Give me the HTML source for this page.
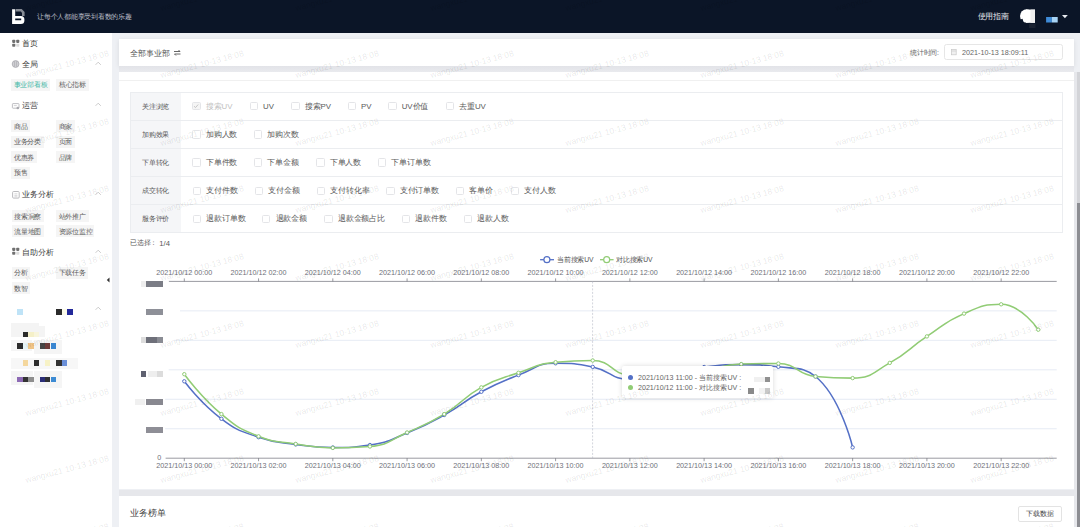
<!DOCTYPE html><html><head><meta charset="utf-8"><style>
*{box-sizing:border-box;margin:0;padding:0}
html,body{width:1080px;height:527px;overflow:hidden;background:#eef0f4;font-family:"Liberation Sans",sans-serif;}
.abs{position:absolute}
.t{position:absolute;white-space:nowrap;line-height:1}
.tag{position:absolute;background:#f5f5f5;height:12px;}
.tag>span{position:absolute;left:2.4px;top:3.5px;font-size:6.75px;color:#595959;line-height:1;white-space:nowrap}
.cb{position:absolute;width:8.3px;height:8.3px;border:1px solid #e4e5e8;border-radius:1.5px;background:#fff}
.opt{position:absolute;font-size:7.875px;color:#595959;line-height:1;white-space:nowrap}
.lab{position:absolute;left:142px;font-size:6.75px;color:#595959;line-height:1;white-space:nowrap}
.pix{position:absolute}
</style></head><body>

<div class="abs" style="left:0;top:0;width:1080px;height:33px;background:#0b1527"></div>
<svg class="abs" style="left:0;top:0" width="40" height="33" viewBox="0 0 40 33">
<path d="M15.7 9.1 H21.7 L24.6 12.0 V15.9 H22.0 V12.9 L20.9 11.6 H15.7 Z" fill="#868b94"/>
<path d="M12.1 9.3 H15.2 V15.9 H20.9 A3.5 3.5 0 0 1 24.4 19.4 V20.4 A3.5 3.5 0 0 1 20.9 23.9 H12.1 Z M15.2 18.4 V20.3 H21.2 V18.4 Z" fill="#fff" fill-rule="evenodd"/>
</svg>
<div class="t" style="left:37px;top:13.6px;font-size:6.75px;color:#b9bdc6"><span style="letter-spacing:-0.250px">让每个人都能享受到看数的乐趣</span></div>
<div class="t" style="left:977.7px;top:12.8px;font-size:7.7px;color:#e6e8ec"><span style="letter-spacing:-0.300px">使用指南</span></div>
<svg class="abs" style="left:1015px;top:5px" width="60" height="25" viewBox="1015 5 60 25">
<circle cx="1026.7" cy="16" r="6.7" fill="#fff"/><rect x="1026" y="9.6" width="9" height="13.2" fill="#fff"/>
<rect x="1029" y="23.7" width="6.5" height="4.3" fill="#1a2232"/><path d="M1020.5 19.5 L1022.5 18.8 L1023.8 22.9 L1021.5 21.8 Z" fill="#0b1527"/><rect x="1030.5" y="9.6" width="4.5" height="13.2" fill="#eeeeee"/>
<rect x="1046.1" y="17" width="5.8" height="5.5" fill="#3f8bd8"/><rect x="1051.9" y="17" width="5.8" height="5.5" fill="#a8d4f5"/>
<path d="M1062 15.1 H1067.8 L1064.9 18.3 Z" fill="#e8ebf0"/>
</svg>
<div class="abs" style="left:0;top:33px;width:112px;height:494px;background:#fff"></div>
<div class="abs" style="left:1074px;top:71.5px;width:6px;height:456px;background:#e6e7eb"></div>
<div class="abs" style="left:1077.4px;top:71.5px;width:2.6px;height:131.2px;background:#d3d4d8"></div>
<div class="abs" style="left:1077.4px;top:202.7px;width:2.6px;height:325px;background:#8c8d92"></div>
<div class="t" style="left:22.3px;top:40.4px;font-size:7.875px;color:#3a3a3a"><span style="letter-spacing:-0.125px">首页</span></div>
<svg class="abs" style="left:0;top:36px" width="22" height="16" viewBox="0 36 22 16"><rect x="12.2" y="39.8" width="3.1" height="3.1" rx="0.8" fill="#707070"/><rect x="16.2" y="39.8" width="3.1" height="3.1" rx="0.8" fill="#707070"/><rect x="12.2" y="43.7" width="3.1" height="3.1" rx="0.8" fill="#707070"/><rect x="16.2" y="43.7" width="3.1" height="3.1" rx="0.8" fill="#dcdcdc"/></svg>
<div class="t" style="left:22.3px;top:60.699999999999996px;font-size:7.875px;color:#3a3a3a"><span style="letter-spacing:-0.125px">全局</span></div>
<svg class="abs" style="left:0;top:56.3px" width="22" height="16" viewBox="0 56.3 22 16"><circle cx="15.6" cy="64.3" r="3.4" fill="#d0d0d4" stroke="#a8a8ae" stroke-width="0.8"/><path d="M14.6 61.699999999999996 V66.89999999999999 M16.6 61.699999999999996 V66.89999999999999" stroke="#a0a0a6" stroke-width="0.55"/></svg>
<svg class="abs" style="left:94.5px;top:60.8px" width="7" height="5"><path d="M0.6 3.8 L3.2 1.2 L5.8 3.8" stroke="#c4c4c4" stroke-width="0.9" fill="none"/></svg>
<div class="t" style="left:22.3px;top:101.9px;font-size:7.875px;color:#3a3a3a"><span style="letter-spacing:-0.125px">运营</span></div>
<svg class="abs" style="left:0;top:97.5px" width="22" height="16" viewBox="0 97.5 22 16"><rect x="12.4" y="103.1" width="6.6" height="4.6" rx="0.6" fill="none" stroke="#b8b8bc" stroke-width="0.9"/><path d="M13.8 105.1 H16.8" stroke="#c8c8cc" stroke-width="0.8"/><circle cx="17.8" cy="107.5" r="1.3" fill="#a8a8ae"/></svg>
<svg class="abs" style="left:94.5px;top:102.0px" width="7" height="5"><path d="M0.6 3.8 L3.2 1.2 L5.8 3.8" stroke="#c4c4c4" stroke-width="0.9" fill="none"/></svg>
<div class="t" style="left:22.3px;top:191.20000000000002px;font-size:7.875px;color:#3a3a3a"><span style="letter-spacing:-0.125px">业务分析</span></div>
<svg class="abs" style="left:0;top:186.8px" width="22" height="16" viewBox="0 186.8 22 16"><rect x="12.6" y="191.3" width="6.6" height="6.6" rx="1" fill="none" stroke="#b4b4b8" stroke-width="0.9"/><path d="M14.4 193.60000000000002 H17.4 M14.4 195.20000000000002 H17.4 M14.4 196.60000000000002 H17.4" stroke="#c8c8cc" stroke-width="0.7"/></svg>
<svg class="abs" style="left:94.5px;top:191.3px" width="7" height="5"><path d="M0.6 3.8 L3.2 1.2 L5.8 3.8" stroke="#c4c4c4" stroke-width="0.9" fill="none"/></svg>
<div class="t" style="left:22.3px;top:248.8px;font-size:7.875px;color:#3a3a3a"><span style="letter-spacing:-0.125px">自助分析</span></div>
<svg class="abs" style="left:0;top:244.4px" width="22" height="16" viewBox="0 244.4 22 16"><rect x="12.2" y="248.20000000000002" width="3.1" height="3.1" rx="0.8" fill="#707070"/><rect x="16.2" y="248.20000000000002" width="3.1" height="3.1" rx="0.8" fill="#707070"/><rect x="12.2" y="252.1" width="3.1" height="3.1" rx="0.8" fill="#707070"/><rect x="16.2" y="252.1" width="3.1" height="3.1" rx="0.8" fill="#dcdcdc"/></svg>
<svg class="abs" style="left:94.5px;top:248.9px" width="7" height="5"><path d="M0.6 3.8 L3.2 1.2 L5.8 3.8" stroke="#c4c4c4" stroke-width="0.9" fill="none"/></svg>
<div class="tag" style="left:11.3px;top:78.5px;width:39.2px"><span style="color:#3fb8a6"><span style="letter-spacing:-0.250px">事业部看板</span></span></div>
<div class="tag" style="left:56.4px;top:78.5px;width:32.3px"><span style="color:#595959"><span style="letter-spacing:-0.250px">核心指标</span></span></div>
<div class="tag" style="left:11.4px;top:120px;width:18.9px"><span style="color:#595959"><span style="letter-spacing:-0.250px">商品</span></span></div>
<div class="tag" style="left:56.2px;top:120px;width:18.8px"><span style="color:#595959"><span style="letter-spacing:-0.250px">商家</span></span></div>
<div class="tag" style="left:11.4px;top:135.6px;width:32.3px"><span style="color:#595959"><span style="letter-spacing:-0.250px">业务分类</span></span></div>
<div class="tag" style="left:56.2px;top:135.6px;width:18.8px"><span style="color:#595959"><span style="letter-spacing:-0.250px">页面</span></span></div>
<div class="tag" style="left:11.4px;top:151.3px;width:25.6px"><span style="color:#595959"><span style="letter-spacing:-0.250px">优惠券</span></span></div>
<div class="tag" style="left:56.2px;top:151.3px;width:18.8px"><span style="color:#595959"><span style="letter-spacing:-0.250px">品牌</span></span></div>
<div class="tag" style="left:11.4px;top:166.9px;width:18.9px"><span style="color:#595959"><span style="letter-spacing:-0.250px">预售</span></span></div>
<div class="tag" style="left:11.8px;top:210.3px;width:31.9px"><span style="color:#595959"><span style="letter-spacing:-0.250px">搜索洞察</span></span></div>
<div class="tag" style="left:56.3px;top:210.3px;width:32.5px"><span style="color:#595959"><span style="letter-spacing:-0.250px">站外推广</span></span></div>
<div class="tag" style="left:11.8px;top:225.3px;width:31.9px"><span style="color:#595959"><span style="letter-spacing:-0.250px">流量地图</span></span></div>
<div class="tag" style="left:56.3px;top:225.3px;width:37.5px"><span style="color:#595959"><span style="letter-spacing:-0.250px">资源位监控</span></span></div>
<div class="tag" style="left:11.8px;top:266.5px;width:18.2px"><span style="color:#595959"><span style="letter-spacing:-0.250px">分析</span></span></div>
<div class="tag" style="left:56.3px;top:266.5px;width:31.8px"><span style="color:#595959"><span style="letter-spacing:-0.250px">下载任务</span></span></div>
<div class="tag" style="left:11.8px;top:282px;width:18.2px"><span style="color:#595959"><span style="letter-spacing:-0.250px">数智</span></span></div>
<svg class="abs" style="left:106px;top:276.5px" width="4" height="6"><path d="M3.5 0.5 L0.8 3 L3.5 5.5 Z" fill="#333"/></svg>
<div class="pix" style="left:16.9px;top:309.2px;width:5.70px;height:5.70px;background:#bfe3f7"></div>
<div class="pix" style="left:56.2px;top:309.2px;width:5.70px;height:5.70px;background:#2b2b2b"></div>
<div class="pix" style="left:61.9px;top:309.2px;width:5.20px;height:5.70px;background:#fbfbe8"></div>
<div class="pix" style="left:67.1px;top:309.2px;width:6.00px;height:5.70px;background:#23299a"></div>
<svg class="abs" style="left:94.5px;top:305.8px" width="7" height="5"><path d="M0.6 3.8 L3.2 1.2 L5.8 3.8" stroke="#c4c4c4" stroke-width="0.9" fill="none"/></svg>
<div class="pix" style="left:11.2px;top:323px;width:28.00px;height:13.70px;background:#f4f4f4"></div>
<div class="pix" style="left:39.2px;top:325.8px;width:5.60px;height:10.90px;background:#f4f4f4"></div>
<div class="pix" style="left:22.6px;top:332px;width:5.40px;height:5.20px;background:#2b2b2b"></div>
<div class="pix" style="left:28px;top:332px;width:5.50px;height:5.20px;background:#f5f0c8"></div>
<div class="pix" style="left:33.5px;top:332px;width:5.70px;height:5.20px;background:#f8f5dc"></div>
<div class="pix" style="left:11.3px;top:339.6px;width:21.00px;height:11.30px;background:#f5f5f5"></div>
<div class="pix" style="left:34px;top:339.6px;width:27.90px;height:14.20px;background:#f5f5f5"></div>
<div class="pix" style="left:17px;top:343px;width:5.60px;height:5.70px;background:#2b2b2b"></div>
<div class="pix" style="left:22.6px;top:343px;width:5.20px;height:5.70px;background:#e6f4f6"></div>
<div class="pix" style="left:27.8px;top:343px;width:6.00px;height:5.70px;background:#f0c487"></div>
<div class="pix" style="left:39.5px;top:343px;width:5.30px;height:5.70px;background:#464646"></div>
<div class="pix" style="left:44.8px;top:343px;width:5.70px;height:5.70px;background:#6e3c3a"></div>
<div class="pix" style="left:50.5px;top:343px;width:5.70px;height:5.70px;background:#3a86d0"></div>
<div class="pix" style="left:11.3px;top:357.5px;width:66.50px;height:11.00px;background:#f7f7f7"></div>
<div class="pix" style="left:22.6px;top:360px;width:5.70px;height:5.50px;background:#f4d79d"></div>
<div class="pix" style="left:34px;top:360px;width:5.10px;height:5.50px;background:#2e2e2e"></div>
<div class="pix" style="left:44.8px;top:360px;width:5.70px;height:5.50px;background:#f7f2c6"></div>
<div class="pix" style="left:56.2px;top:360px;width:5.70px;height:5.50px;background:#333"></div>
<div class="pix" style="left:61.9px;top:360px;width:5.40px;height:5.50px;background:#6a8fd8"></div>
<div class="pix" style="left:11.3px;top:371.4px;width:22.10px;height:13.60px;background:#f5f5f5"></div>
<div class="pix" style="left:34px;top:371.4px;width:27.90px;height:16.60px;background:#f5f5f5"></div>
<div class="pix" style="left:17px;top:377.1px;width:5.60px;height:5.10px;background:#8d6ab5"></div>
<div class="pix" style="left:22.6px;top:377.1px;width:5.70px;height:5.10px;background:#333"></div>
<div class="pix" style="left:28.3px;top:377.1px;width:5.50px;height:5.10px;background:#8e8e8e"></div>
<div class="pix" style="left:39.5px;top:377.1px;width:5.30px;height:5.10px;background:#2b2e78"></div>
<div class="pix" style="left:44.8px;top:377.1px;width:5.70px;height:5.10px;background:#2f3033"></div>
<div class="pix" style="left:50.5px;top:377.1px;width:5.70px;height:5.10px;background:#3c8bd3"></div>
<div class="abs" style="left:118.5px;top:38.8px;width:955.3px;height:27px;background:#fff;box-shadow:0 1px 5px rgba(0,0,0,0.09)"></div>
<div class="abs" style="left:118.5px;top:65.8px;width:955.3px;height:6px;background:linear-gradient(#e2e3e8,#e9eaee)"></div>
<div class="t" style="left:130px;top:49.6px;font-size:7.875px;color:#555"><span style="letter-spacing:-0.125px">全部事业部</span></div>
<svg class="abs" style="left:172.5px;top:49px" width="9" height="8"><path d="M1 2.5 H7 L5.5 1 M7.5 5 H1.5 L3 6.5" stroke="#555" stroke-width="0.9" fill="none"/></svg>
<div class="t" style="left:910px;top:49.8px;font-size:6.75px;color:#666"><span style="letter-spacing:-0.250px">统计时间</span>:</div>
<div class="abs" style="left:944.3px;top:44.2px;width:118.5px;height:15.9px;border:1px solid #e6e6e6;border-radius:2.5px;background:#fff"></div>
<svg class="abs" style="left:951px;top:49px" width="6" height="7"><rect x="0.4" y="0.6" width="4.8" height="5.2" fill="#f0f0f0" stroke="#c8c8c8" stroke-width="0.7"/><path d="M0.4 2 H5.2" stroke="#c8c8c8" stroke-width="0.6"/></svg>
<div class="t" style="left:962px;top:49px;font-size:7.2px;color:#666">2021-10-13 18:09:11</div>
<div class="abs" style="left:118.5px;top:71.7px;width:955.3px;height:417.8px;background:#fff"></div>
<div class="abs" style="left:118.5px;top:80px;width:955.3px;height:1px;background:#f0f0f0"></div>
<div class="abs" style="left:130px;top:92px;width:932.5px;height:140.5px;border:1px solid #ebedf0;background:#fff"></div>
<div class="abs" style="left:130.5px;top:92.5px;width:50.5px;height:139.5px;background:#f5f6f8"></div>
<div class="abs" style="left:130.5px;top:120.10px;width:931.5px;height:1px;background:#ebedf0"></div>
<div class="abs" style="left:130.5px;top:148.20px;width:931.5px;height:1px;background:#ebedf0"></div>
<div class="abs" style="left:130.5px;top:176.30px;width:931.5px;height:1px;background:#ebedf0"></div>
<div class="abs" style="left:130.5px;top:204.40px;width:931.5px;height:1px;background:#ebedf0"></div>
<div class="lab" style="top:103.50px"><span style="letter-spacing:-0.250px">关注浏览</span></div>
<div class="cb" style="left:192.4px;top:102.20px;background:#f5f5f5"></div>
<svg class="abs" style="left:192.4px;top:102.20px" width="8" height="8"><path d="M2 4.2 L3.5 5.6 L6.2 2.5" stroke="#bfbfbf" stroke-width="0.9" fill="none"/></svg>
<div class="opt" style="left:205.80px;top:102.90px;color:#bfbfbf"><span style="letter-spacing:-0.125px">搜索</span>UV</div>
<div class="cb" style="left:249.6px;top:102.20px"></div>
<div class="opt" style="left:263.00px;top:102.90px">UV</div>
<div class="cb" style="left:291.4px;top:102.20px"></div>
<div class="opt" style="left:304.80px;top:102.90px"><span style="letter-spacing:-0.125px">搜索</span>PV</div>
<div class="cb" style="left:347.7px;top:102.20px"></div>
<div class="opt" style="left:361.10px;top:102.90px">PV</div>
<div class="cb" style="left:388.3px;top:102.20px"></div>
<div class="opt" style="left:401.70px;top:102.90px">UV<span style="letter-spacing:-0.125px">价值</span></div>
<div class="cb" style="left:445.8px;top:102.20px"></div>
<div class="opt" style="left:459.20px;top:102.90px"><span style="letter-spacing:-0.125px">去重</span>UV</div>
<div class="lab" style="top:131.60px"><span style="letter-spacing:-0.250px">加购效果</span></div>
<div class="cb" style="left:192.4px;top:130.30px"></div>
<div class="opt" style="left:205.80px;top:131.00px"><span style="letter-spacing:-0.125px">加购人数</span></div>
<div class="cb" style="left:254px;top:130.30px"></div>
<div class="opt" style="left:267.40px;top:131.00px"><span style="letter-spacing:-0.125px">加购次数</span></div>
<div class="lab" style="top:159.70px"><span style="letter-spacing:-0.250px">下单转化</span></div>
<div class="cb" style="left:192.4px;top:158.40px"></div>
<div class="opt" style="left:205.80px;top:159.10px"><span style="letter-spacing:-0.125px">下单件数</span></div>
<div class="cb" style="left:254px;top:158.40px"></div>
<div class="opt" style="left:267.40px;top:159.10px"><span style="letter-spacing:-0.125px">下单金额</span></div>
<div class="cb" style="left:316.3px;top:158.40px"></div>
<div class="opt" style="left:329.70px;top:159.10px"><span style="letter-spacing:-0.125px">下单人数</span></div>
<div class="cb" style="left:378px;top:158.40px"></div>
<div class="opt" style="left:391.40px;top:159.10px"><span style="letter-spacing:-0.125px">下单订单数</span></div>
<div class="lab" style="top:187.80px"><span style="letter-spacing:-0.250px">成交转化</span></div>
<div class="cb" style="left:192.6px;top:186.50px"></div>
<div class="opt" style="left:206.00px;top:187.20px"><span style="letter-spacing:-0.125px">支付件数</span></div>
<div class="cb" style="left:254.8px;top:186.50px"></div>
<div class="opt" style="left:268.20px;top:187.20px"><span style="letter-spacing:-0.125px">支付金额</span></div>
<div class="cb" style="left:316.7px;top:186.50px"></div>
<div class="opt" style="left:330.10px;top:187.20px"><span style="letter-spacing:-0.125px">支付转化率</span></div>
<div class="cb" style="left:386.3px;top:186.50px"></div>
<div class="opt" style="left:399.70px;top:187.20px"><span style="letter-spacing:-0.125px">支付订单数</span></div>
<div class="cb" style="left:456px;top:186.50px"></div>
<div class="opt" style="left:469.40px;top:187.20px"><span style="letter-spacing:-0.125px">客单价</span></div>
<div class="cb" style="left:510.7px;top:186.50px"></div>
<div class="opt" style="left:524.10px;top:187.20px"><span style="letter-spacing:-0.125px">支付人数</span></div>
<div class="lab" style="top:215.90px"><span style="letter-spacing:-0.250px">服务评价</span></div>
<div class="cb" style="left:192.6px;top:214.60px"></div>
<div class="opt" style="left:206.00px;top:215.30px"><span style="letter-spacing:-0.125px">退款订单数</span></div>
<div class="cb" style="left:262.2px;top:214.60px"></div>
<div class="opt" style="left:275.60px;top:215.30px"><span style="letter-spacing:-0.125px">退款金额</span></div>
<div class="cb" style="left:324.4px;top:214.60px"></div>
<div class="opt" style="left:337.80px;top:215.30px"><span style="letter-spacing:-0.125px">退款金额占比</span></div>
<div class="cb" style="left:401.9px;top:214.60px"></div>
<div class="opt" style="left:415.30px;top:215.30px"><span style="letter-spacing:-0.125px">退款件数</span></div>
<div class="cb" style="left:463.7px;top:214.60px"></div>
<div class="opt" style="left:477.10px;top:215.30px"><span style="letter-spacing:-0.125px">退款人数</span></div>
<div class="t" style="left:130px;top:240.1px;font-size:6.75px;color:#595959"><span style="letter-spacing:-0.250px">已选择：</span></div>
<div class="t" style="left:159.3px;top:239.7px;font-size:7.7px;color:#595959">1/4</div>
<svg class="abs" style="left:0;top:0" width="1080" height="527" viewBox="0 0 1080 527">
<line x1="180" y1="310.87" x2="1056.7" y2="310.87" stroke="#e0e6f1" stroke-width="0.8"/>
<line x1="174.4" y1="340.34" x2="1056.7" y2="340.34" stroke="#e0e6f1" stroke-width="0.8"/>
<line x1="168.7" y1="369.81" x2="1056.7" y2="369.81" stroke="#e0e6f1" stroke-width="0.8"/>
<line x1="165.1" y1="399.28" x2="1056.7" y2="399.28" stroke="#e0e6f1" stroke-width="0.8"/>
<line x1="165.1" y1="428.75" x2="1056.7" y2="428.75" stroke="#e0e6f1" stroke-width="0.8"/>
<line x1="168.9" y1="281.4" x2="1056.7" y2="281.4" stroke="#6e7079" stroke-width="0.7"/>
<line x1="165.6" y1="458.2" x2="1056.7" y2="458.2" stroke="#6e7079" stroke-width="0.7"/>
<line x1="184.30" y1="278.4" x2="184.30" y2="281.4" stroke="#6e7079" stroke-width="0.7"/>
<line x1="184.30" y1="458.2" x2="184.30" y2="461.2" stroke="#6e7079" stroke-width="0.7"/>
<line x1="258.56" y1="278.4" x2="258.56" y2="281.4" stroke="#6e7079" stroke-width="0.7"/>
<line x1="258.56" y1="458.2" x2="258.56" y2="461.2" stroke="#6e7079" stroke-width="0.7"/>
<line x1="332.82" y1="278.4" x2="332.82" y2="281.4" stroke="#6e7079" stroke-width="0.7"/>
<line x1="332.82" y1="458.2" x2="332.82" y2="461.2" stroke="#6e7079" stroke-width="0.7"/>
<line x1="407.08" y1="278.4" x2="407.08" y2="281.4" stroke="#6e7079" stroke-width="0.7"/>
<line x1="407.08" y1="458.2" x2="407.08" y2="461.2" stroke="#6e7079" stroke-width="0.7"/>
<line x1="481.34" y1="278.4" x2="481.34" y2="281.4" stroke="#6e7079" stroke-width="0.7"/>
<line x1="481.34" y1="458.2" x2="481.34" y2="461.2" stroke="#6e7079" stroke-width="0.7"/>
<line x1="555.60" y1="278.4" x2="555.60" y2="281.4" stroke="#6e7079" stroke-width="0.7"/>
<line x1="555.60" y1="458.2" x2="555.60" y2="461.2" stroke="#6e7079" stroke-width="0.7"/>
<line x1="629.86" y1="278.4" x2="629.86" y2="281.4" stroke="#6e7079" stroke-width="0.7"/>
<line x1="629.86" y1="458.2" x2="629.86" y2="461.2" stroke="#6e7079" stroke-width="0.7"/>
<line x1="704.12" y1="278.4" x2="704.12" y2="281.4" stroke="#6e7079" stroke-width="0.7"/>
<line x1="704.12" y1="458.2" x2="704.12" y2="461.2" stroke="#6e7079" stroke-width="0.7"/>
<line x1="778.38" y1="278.4" x2="778.38" y2="281.4" stroke="#6e7079" stroke-width="0.7"/>
<line x1="778.38" y1="458.2" x2="778.38" y2="461.2" stroke="#6e7079" stroke-width="0.7"/>
<line x1="852.64" y1="278.4" x2="852.64" y2="281.4" stroke="#6e7079" stroke-width="0.7"/>
<line x1="852.64" y1="458.2" x2="852.64" y2="461.2" stroke="#6e7079" stroke-width="0.7"/>
<line x1="926.90" y1="278.4" x2="926.90" y2="281.4" stroke="#6e7079" stroke-width="0.7"/>
<line x1="926.90" y1="458.2" x2="926.90" y2="461.2" stroke="#6e7079" stroke-width="0.7"/>
<line x1="1001.16" y1="278.4" x2="1001.16" y2="281.4" stroke="#6e7079" stroke-width="0.7"/>
<line x1="1001.16" y1="458.2" x2="1001.16" y2="461.2" stroke="#6e7079" stroke-width="0.7"/>
<line x1="592.6" y1="281.4" x2="592.6" y2="458.2" stroke="#b6b9c6" stroke-width="0.6" stroke-dasharray="2 1.5"/>
<path d="M184.30 381.30 C184.30 381.30 200.63 403.14 221.43 418.80 C237.76 431.09 239.15 430.51 258.56 437.20 C276.28 443.31 276.99 441.81 295.69 444.40 C314.12 446.96 314.24 447.50 332.82 447.50 C351.37 447.50 351.83 447.50 369.95 445.00 C388.96 442.38 389.03 440.29 407.08 433.00 C426.16 425.29 426.19 424.99 444.21 415.00 C463.32 404.39 462.10 402.14 481.34 391.80 C499.23 382.19 499.50 382.38 518.47 375.10 C536.63 368.13 536.63 363.30 555.60 363.30 C573.76 363.30 574.63 363.30 592.73 366.90 C611.76 370.68 610.80 379.50 629.86 379.50 C647.93 379.50 648.77 379.50 666.99 377.50 C685.90 375.42 685.22 369.49 704.12 367.00 C722.35 364.60 722.68 364.60 741.25 364.60 C759.81 364.60 760.11 364.60 778.38 366.80 C797.24 369.07 803.48 366.80 815.51 376.50 C840.61 396.73 852.64 447.40 852.64 447.40" fill="none" stroke="#5470c6" stroke-width="1.55"/>
<path d="M184.30 374.20 C184.30 374.20 200.73 396.79 221.43 414.10 C237.86 427.84 238.77 428.36 258.56 436.30 C275.90 443.26 276.99 440.98 295.69 443.90 C314.12 446.78 314.21 447.90 332.82 447.90 C351.34 447.90 352.00 447.90 369.95 446.50 C389.13 445.00 388.92 440.42 407.08 432.50 C426.05 424.22 426.56 424.82 444.21 414.10 C463.69 402.27 461.51 398.43 481.34 387.40 C498.64 377.78 499.60 379.20 518.47 372.80 C536.73 366.60 536.68 363.97 555.60 362.20 C573.81 360.50 574.86 360.50 592.73 360.50 C611.99 360.50 610.60 373.88 629.86 375.50 C647.73 377.00 648.56 377.00 666.99 377.00 C685.69 377.00 685.55 373.73 704.12 370.50 C722.68 367.28 722.55 364.71 741.25 364.10 C759.68 363.50 760.35 363.50 778.38 363.50 C797.48 363.50 796.42 374.81 815.51 376.50 C833.55 378.10 834.79 378.10 852.64 378.10 C871.92 378.10 872.40 372.66 889.77 362.90 C909.53 351.81 907.91 349.01 926.90 336.40 C945.04 324.36 944.26 322.14 964.03 313.60 C981.39 306.09 984.09 304.30 1001.16 304.30 C1021.22 304.30 1038.29 329.70 1038.29 329.70" fill="none" stroke="#91cc75" stroke-width="1.55"/>
<circle cx="184.30" cy="381.30" r="1.7" fill="#fff" stroke="#5470c6" stroke-width="1"/>
<circle cx="221.43" cy="418.80" r="1.7" fill="#fff" stroke="#5470c6" stroke-width="1"/>
<circle cx="258.56" cy="437.20" r="1.7" fill="#fff" stroke="#5470c6" stroke-width="1"/>
<circle cx="295.69" cy="444.40" r="1.7" fill="#fff" stroke="#5470c6" stroke-width="1"/>
<circle cx="332.82" cy="447.50" r="1.7" fill="#fff" stroke="#5470c6" stroke-width="1"/>
<circle cx="369.95" cy="445.00" r="1.7" fill="#fff" stroke="#5470c6" stroke-width="1"/>
<circle cx="407.08" cy="433.00" r="1.7" fill="#fff" stroke="#5470c6" stroke-width="1"/>
<circle cx="444.21" cy="415.00" r="1.7" fill="#fff" stroke="#5470c6" stroke-width="1"/>
<circle cx="481.34" cy="391.80" r="1.7" fill="#fff" stroke="#5470c6" stroke-width="1"/>
<circle cx="518.47" cy="375.10" r="1.7" fill="#fff" stroke="#5470c6" stroke-width="1"/>
<circle cx="555.60" cy="363.30" r="1.7" fill="#fff" stroke="#5470c6" stroke-width="1"/>
<circle cx="592.73" cy="366.90" r="1.7" fill="#fff" stroke="#5470c6" stroke-width="1"/>
<circle cx="629.86" cy="379.50" r="1.7" fill="#fff" stroke="#5470c6" stroke-width="1"/>
<circle cx="666.99" cy="377.50" r="1.7" fill="#fff" stroke="#5470c6" stroke-width="1"/>
<circle cx="704.12" cy="367.00" r="1.7" fill="#fff" stroke="#5470c6" stroke-width="1"/>
<circle cx="741.25" cy="364.60" r="1.7" fill="#fff" stroke="#5470c6" stroke-width="1"/>
<circle cx="778.38" cy="366.80" r="1.7" fill="#fff" stroke="#5470c6" stroke-width="1"/>
<circle cx="815.51" cy="376.50" r="1.7" fill="#fff" stroke="#5470c6" stroke-width="1"/>
<circle cx="852.64" cy="447.40" r="1.7" fill="#fff" stroke="#5470c6" stroke-width="1"/>
<circle cx="184.30" cy="374.20" r="1.7" fill="#fff" stroke="#91cc75" stroke-width="1"/>
<circle cx="221.43" cy="414.10" r="1.7" fill="#fff" stroke="#91cc75" stroke-width="1"/>
<circle cx="258.56" cy="436.30" r="1.7" fill="#fff" stroke="#91cc75" stroke-width="1"/>
<circle cx="295.69" cy="443.90" r="1.7" fill="#fff" stroke="#91cc75" stroke-width="1"/>
<circle cx="332.82" cy="447.90" r="1.7" fill="#fff" stroke="#91cc75" stroke-width="1"/>
<circle cx="369.95" cy="446.50" r="1.7" fill="#fff" stroke="#91cc75" stroke-width="1"/>
<circle cx="407.08" cy="432.50" r="1.7" fill="#fff" stroke="#91cc75" stroke-width="1"/>
<circle cx="444.21" cy="414.10" r="1.7" fill="#fff" stroke="#91cc75" stroke-width="1"/>
<circle cx="481.34" cy="387.40" r="1.7" fill="#fff" stroke="#91cc75" stroke-width="1"/>
<circle cx="518.47" cy="372.80" r="1.7" fill="#fff" stroke="#91cc75" stroke-width="1"/>
<circle cx="555.60" cy="362.20" r="1.7" fill="#fff" stroke="#91cc75" stroke-width="1"/>
<circle cx="592.73" cy="360.50" r="1.7" fill="#fff" stroke="#91cc75" stroke-width="1"/>
<circle cx="629.86" cy="375.50" r="1.7" fill="#fff" stroke="#91cc75" stroke-width="1"/>
<circle cx="666.99" cy="377.00" r="1.7" fill="#fff" stroke="#91cc75" stroke-width="1"/>
<circle cx="704.12" cy="370.50" r="1.7" fill="#fff" stroke="#91cc75" stroke-width="1"/>
<circle cx="741.25" cy="364.10" r="1.7" fill="#fff" stroke="#91cc75" stroke-width="1"/>
<circle cx="778.38" cy="363.50" r="1.7" fill="#fff" stroke="#91cc75" stroke-width="1"/>
<circle cx="815.51" cy="376.50" r="1.7" fill="#fff" stroke="#91cc75" stroke-width="1"/>
<circle cx="852.64" cy="378.10" r="1.7" fill="#fff" stroke="#91cc75" stroke-width="1"/>
<circle cx="889.77" cy="362.90" r="1.7" fill="#fff" stroke="#91cc75" stroke-width="1"/>
<circle cx="926.90" cy="336.40" r="1.7" fill="#fff" stroke="#91cc75" stroke-width="1"/>
<circle cx="964.03" cy="313.60" r="1.7" fill="#fff" stroke="#91cc75" stroke-width="1"/>
<circle cx="1001.16" cy="304.30" r="1.7" fill="#fff" stroke="#91cc75" stroke-width="1"/>
<circle cx="1038.29" cy="329.70" r="1.7" fill="#fff" stroke="#91cc75" stroke-width="1"/>
<line x1="540.1" y1="259.7" x2="554" y2="259.7" stroke="#5470c6" stroke-width="1.3"/><circle cx="546.9" cy="259.7" r="3" fill="#fff" stroke="#5470c6" stroke-width="1.2"/>
<line x1="600" y1="259.7" x2="613.6" y2="259.7" stroke="#91cc75" stroke-width="1.3"/><circle cx="606.7" cy="259.7" r="3" fill="#fff" stroke="#91cc75" stroke-width="1.2"/>
</svg>
<div class="t" style="left:557.2px;top:257.1px;font-size:6.75px;color:#555"><span style="letter-spacing:-0.250px">当前搜索</span>UV</div>
<div class="t" style="left:616.2px;top:257.1px;font-size:6.75px;color:#555"><span style="letter-spacing:-0.250px">对比搜索</span>UV</div>
<div class="t" style="left:144.30px;width:80px;text-align:center;top:269px;font-size:7.2px;color:#6e7079">2021/10/12 00:00</div>
<div class="t" style="left:144.30px;width:80px;text-align:center;top:462px;font-size:7.2px;color:#6e7079">2021/10/13 00:00</div>
<div class="t" style="left:218.56px;width:80px;text-align:center;top:269px;font-size:7.2px;color:#6e7079">2021/10/12 02:00</div>
<div class="t" style="left:218.56px;width:80px;text-align:center;top:462px;font-size:7.2px;color:#6e7079">2021/10/13 02:00</div>
<div class="t" style="left:292.82px;width:80px;text-align:center;top:269px;font-size:7.2px;color:#6e7079">2021/10/12 04:00</div>
<div class="t" style="left:292.82px;width:80px;text-align:center;top:462px;font-size:7.2px;color:#6e7079">2021/10/13 04:00</div>
<div class="t" style="left:367.08px;width:80px;text-align:center;top:269px;font-size:7.2px;color:#6e7079">2021/10/12 06:00</div>
<div class="t" style="left:367.08px;width:80px;text-align:center;top:462px;font-size:7.2px;color:#6e7079">2021/10/13 06:00</div>
<div class="t" style="left:441.34px;width:80px;text-align:center;top:269px;font-size:7.2px;color:#6e7079">2021/10/12 08:00</div>
<div class="t" style="left:441.34px;width:80px;text-align:center;top:462px;font-size:7.2px;color:#6e7079">2021/10/13 08:00</div>
<div class="t" style="left:515.60px;width:80px;text-align:center;top:269px;font-size:7.2px;color:#6e7079">2021/10/12 10:00</div>
<div class="t" style="left:515.60px;width:80px;text-align:center;top:462px;font-size:7.2px;color:#6e7079">2021/10/13 10:00</div>
<div class="t" style="left:589.86px;width:80px;text-align:center;top:269px;font-size:7.2px;color:#6e7079">2021/10/12 12:00</div>
<div class="t" style="left:589.86px;width:80px;text-align:center;top:462px;font-size:7.2px;color:#6e7079">2021/10/13 12:00</div>
<div class="t" style="left:664.12px;width:80px;text-align:center;top:269px;font-size:7.2px;color:#6e7079">2021/10/12 14:00</div>
<div class="t" style="left:664.12px;width:80px;text-align:center;top:462px;font-size:7.2px;color:#6e7079">2021/10/13 14:00</div>
<div class="t" style="left:738.38px;width:80px;text-align:center;top:269px;font-size:7.2px;color:#6e7079">2021/10/12 16:00</div>
<div class="t" style="left:738.38px;width:80px;text-align:center;top:462px;font-size:7.2px;color:#6e7079">2021/10/13 16:00</div>
<div class="t" style="left:812.64px;width:80px;text-align:center;top:269px;font-size:7.2px;color:#6e7079">2021/10/12 18:00</div>
<div class="t" style="left:812.64px;width:80px;text-align:center;top:462px;font-size:7.2px;color:#6e7079">2021/10/13 18:00</div>
<div class="t" style="left:886.90px;width:80px;text-align:center;top:269px;font-size:7.2px;color:#6e7079">2021/10/12 20:00</div>
<div class="t" style="left:886.90px;width:80px;text-align:center;top:462px;font-size:7.2px;color:#6e7079">2021/10/13 20:00</div>
<div class="t" style="left:961.16px;width:80px;text-align:center;top:269px;font-size:7.2px;color:#6e7079">2021/10/12 22:00</div>
<div class="t" style="left:961.16px;width:80px;text-align:center;top:462px;font-size:7.2px;color:#6e7079">2021/10/13 22:00</div>
<div class="t" style="left:157.2px;top:454px;font-size:7.2px;color:#6e7079">0</div>
<div class="pix" style="left:140.7px;top:281.1px;width:5.30px;height:5.70px;background:#eeeeee"></div>
<div class="pix" style="left:146px;top:281.1px;width:17.00px;height:5.70px;background:#7b7d86"></div>
<div class="pix" style="left:146px;top:309.2px;width:17.00px;height:5.60px;background:#8e9098"></div>
<div class="pix" style="left:140.8px;top:337.3px;width:5.20px;height:5.60px;background:#dddddd"></div>
<div class="pix" style="left:146px;top:337.3px;width:11.40px;height:5.60px;background:#6e707a"></div>
<div class="pix" style="left:157.4px;top:337.3px;width:5.60px;height:5.60px;background:#8a8c94"></div>
<div class="pix" style="left:140.8px;top:371px;width:5.20px;height:5.70px;background:#5f6170"></div>
<div class="pix" style="left:147.7px;top:371px;width:9.10px;height:5.70px;background:#eeeeee"></div>
<div class="pix" style="left:157.4px;top:371px;width:5.60px;height:5.70px;background:#dcdcdc"></div>
<div class="pix" style="left:135.2px;top:399.3px;width:9.40px;height:5.70px;background:#f0f0f0"></div>
<div class="pix" style="left:146.3px;top:399.3px;width:16.70px;height:5.70px;background:#888890"></div>
<div class="pix" style="left:146.3px;top:427.4px;width:16.70px;height:5.80px;background:#8e8e96"></div>
<div class="abs" style="left:621.9px;top:365.9px;width:151.2px;height:32.6px;background:#fff;border-radius:2px;box-shadow:0 0 5px rgba(0,0,0,0.15)"></div>
<div class="abs" style="left:627.8px;top:374.8px;width:5.5px;height:5.5px;border-radius:50%;background:#5470c6"></div>
<div class="abs" style="left:627.8px;top:384.7px;width:5.5px;height:5.5px;border-radius:50%;background:#91cc75"></div>
<div class="t" style="left:638px;top:374.9px;font-size:7.1px;color:#666">2021/10/13 11:00 - <span style="letter-spacing:0.100px">当前搜索</span>UV :</div>
<div class="t" style="left:638px;top:384.8px;font-size:7.1px;color:#666">2021/10/12 11:00 - <span style="letter-spacing:0.100px">对比搜索</span>UV :</div>
<div class="pix" style="left:753.7px;top:376.7px;width:11.10px;height:5.50px;background:#f0f0f0"></div>
<div class="pix" style="left:764.8px;top:376.7px;width:5.60px;height:5.50px;background:#909090"></div>
<div class="pix" style="left:748px;top:387.8px;width:5.70px;height:5.90px;background:#8a8a8a"></div>
<div class="pix" style="left:759px;top:387.8px;width:5.80px;height:5.90px;background:#f2f2f2"></div>
<div class="pix" style="left:764.8px;top:387.8px;width:5.60px;height:5.90px;background:#c8c8c8"></div>
<div class="abs" style="left:118.5px;top:489.5px;width:955.3px;height:6.5px;background:#e6e7eb"></div>
<div class="abs" style="left:118.5px;top:496px;width:955.3px;height:31px;background:#fff"></div>
<div class="t" style="left:130px;top:508.5px;font-size:9px;color:#444">业务榜单</div>
<div class="abs" style="left:1017.8px;top:506.3px;width:44.6px;height:15.4px;border:1px solid #e3e3e3;border-radius:2px;background:#fff"></div>
<div class="t" style="left:1026.3px;top:511.2px;font-size:6.75px;color:#444"><span style="letter-spacing:-0.250px">下载数据</span></div>
<div class="abs" style="left:0;top:0;width:1080px;height:527px;pointer-events:none;overflow:hidden"><div class="t" style="left:-112.7px;top:-7.5px;width:90px;text-align:center;font-size:8.45px;color:rgba(0,0,0,0.105);transform:rotate(-15deg)">wangxu21 10-13 18:08</div><div class="t" style="left:22.2px;top:-7.5px;width:90px;text-align:center;font-size:8.45px;color:rgba(0,0,0,0.105);transform:rotate(-15deg)">wangxu21 10-13 18:08</div><div class="t" style="left:157.1px;top:-7.5px;width:90px;text-align:center;font-size:8.45px;color:rgba(0,0,0,0.105);transform:rotate(-15deg)">wangxu21 10-13 18:08</div><div class="t" style="left:292.0px;top:-7.5px;width:90px;text-align:center;font-size:8.45px;color:rgba(0,0,0,0.105);transform:rotate(-15deg)">wangxu21 10-13 18:08</div><div class="t" style="left:426.9px;top:-7.5px;width:90px;text-align:center;font-size:8.45px;color:rgba(0,0,0,0.105);transform:rotate(-15deg)">wangxu21 10-13 18:08</div><div class="t" style="left:561.8px;top:-7.5px;width:90px;text-align:center;font-size:8.45px;color:rgba(0,0,0,0.105);transform:rotate(-15deg)">wangxu21 10-13 18:08</div><div class="t" style="left:696.7px;top:-7.5px;width:90px;text-align:center;font-size:8.45px;color:rgba(0,0,0,0.105);transform:rotate(-15deg)">wangxu21 10-13 18:08</div><div class="t" style="left:831.6px;top:-7.5px;width:90px;text-align:center;font-size:8.45px;color:rgba(0,0,0,0.105);transform:rotate(-15deg)">wangxu21 10-13 18:08</div><div class="t" style="left:966.5px;top:-7.5px;width:90px;text-align:center;font-size:8.45px;color:rgba(0,0,0,0.105);transform:rotate(-15deg)">wangxu21 10-13 18:08</div><div class="t" style="left:1101.4px;top:-7.5px;width:90px;text-align:center;font-size:8.45px;color:rgba(0,0,0,0.105);transform:rotate(-15deg)">wangxu21 10-13 18:08</div><div class="t" style="left:-112.7px;top:60.0px;width:90px;text-align:center;font-size:8.45px;color:rgba(0,0,0,0.105);transform:rotate(-15deg)">wangxu21 10-13 18:08</div><div class="t" style="left:22.2px;top:60.0px;width:90px;text-align:center;font-size:8.45px;color:rgba(0,0,0,0.105);transform:rotate(-15deg)">wangxu21 10-13 18:08</div><div class="t" style="left:157.1px;top:60.0px;width:90px;text-align:center;font-size:8.45px;color:rgba(0,0,0,0.105);transform:rotate(-15deg)">wangxu21 10-13 18:08</div><div class="t" style="left:292.0px;top:60.0px;width:90px;text-align:center;font-size:8.45px;color:rgba(0,0,0,0.105);transform:rotate(-15deg)">wangxu21 10-13 18:08</div><div class="t" style="left:426.9px;top:60.0px;width:90px;text-align:center;font-size:8.45px;color:rgba(0,0,0,0.105);transform:rotate(-15deg)">wangxu21 10-13 18:08</div><div class="t" style="left:561.8px;top:60.0px;width:90px;text-align:center;font-size:8.45px;color:rgba(0,0,0,0.105);transform:rotate(-15deg)">wangxu21 10-13 18:08</div><div class="t" style="left:696.7px;top:60.0px;width:90px;text-align:center;font-size:8.45px;color:rgba(0,0,0,0.105);transform:rotate(-15deg)">wangxu21 10-13 18:08</div><div class="t" style="left:831.6px;top:60.0px;width:90px;text-align:center;font-size:8.45px;color:rgba(0,0,0,0.105);transform:rotate(-15deg)">wangxu21 10-13 18:08</div><div class="t" style="left:966.5px;top:60.0px;width:90px;text-align:center;font-size:8.45px;color:rgba(0,0,0,0.105);transform:rotate(-15deg)">wangxu21 10-13 18:08</div><div class="t" style="left:1101.4px;top:60.0px;width:90px;text-align:center;font-size:8.45px;color:rgba(0,0,0,0.105);transform:rotate(-15deg)">wangxu21 10-13 18:08</div><div class="t" style="left:-112.7px;top:127.5px;width:90px;text-align:center;font-size:8.45px;color:rgba(0,0,0,0.105);transform:rotate(-15deg)">wangxu21 10-13 18:08</div><div class="t" style="left:22.2px;top:127.5px;width:90px;text-align:center;font-size:8.45px;color:rgba(0,0,0,0.105);transform:rotate(-15deg)">wangxu21 10-13 18:08</div><div class="t" style="left:157.1px;top:127.5px;width:90px;text-align:center;font-size:8.45px;color:rgba(0,0,0,0.105);transform:rotate(-15deg)">wangxu21 10-13 18:08</div><div class="t" style="left:292.0px;top:127.5px;width:90px;text-align:center;font-size:8.45px;color:rgba(0,0,0,0.105);transform:rotate(-15deg)">wangxu21 10-13 18:08</div><div class="t" style="left:426.9px;top:127.5px;width:90px;text-align:center;font-size:8.45px;color:rgba(0,0,0,0.105);transform:rotate(-15deg)">wangxu21 10-13 18:08</div><div class="t" style="left:561.8px;top:127.5px;width:90px;text-align:center;font-size:8.45px;color:rgba(0,0,0,0.105);transform:rotate(-15deg)">wangxu21 10-13 18:08</div><div class="t" style="left:696.7px;top:127.5px;width:90px;text-align:center;font-size:8.45px;color:rgba(0,0,0,0.105);transform:rotate(-15deg)">wangxu21 10-13 18:08</div><div class="t" style="left:831.6px;top:127.5px;width:90px;text-align:center;font-size:8.45px;color:rgba(0,0,0,0.105);transform:rotate(-15deg)">wangxu21 10-13 18:08</div><div class="t" style="left:966.5px;top:127.5px;width:90px;text-align:center;font-size:8.45px;color:rgba(0,0,0,0.105);transform:rotate(-15deg)">wangxu21 10-13 18:08</div><div class="t" style="left:1101.4px;top:127.5px;width:90px;text-align:center;font-size:8.45px;color:rgba(0,0,0,0.105);transform:rotate(-15deg)">wangxu21 10-13 18:08</div><div class="t" style="left:-112.7px;top:195.0px;width:90px;text-align:center;font-size:8.45px;color:rgba(0,0,0,0.105);transform:rotate(-15deg)">wangxu21 10-13 18:08</div><div class="t" style="left:22.2px;top:195.0px;width:90px;text-align:center;font-size:8.45px;color:rgba(0,0,0,0.105);transform:rotate(-15deg)">wangxu21 10-13 18:08</div><div class="t" style="left:157.1px;top:195.0px;width:90px;text-align:center;font-size:8.45px;color:rgba(0,0,0,0.105);transform:rotate(-15deg)">wangxu21 10-13 18:08</div><div class="t" style="left:292.0px;top:195.0px;width:90px;text-align:center;font-size:8.45px;color:rgba(0,0,0,0.105);transform:rotate(-15deg)">wangxu21 10-13 18:08</div><div class="t" style="left:426.9px;top:195.0px;width:90px;text-align:center;font-size:8.45px;color:rgba(0,0,0,0.105);transform:rotate(-15deg)">wangxu21 10-13 18:08</div><div class="t" style="left:561.8px;top:195.0px;width:90px;text-align:center;font-size:8.45px;color:rgba(0,0,0,0.105);transform:rotate(-15deg)">wangxu21 10-13 18:08</div><div class="t" style="left:696.7px;top:195.0px;width:90px;text-align:center;font-size:8.45px;color:rgba(0,0,0,0.105);transform:rotate(-15deg)">wangxu21 10-13 18:08</div><div class="t" style="left:831.6px;top:195.0px;width:90px;text-align:center;font-size:8.45px;color:rgba(0,0,0,0.105);transform:rotate(-15deg)">wangxu21 10-13 18:08</div><div class="t" style="left:966.5px;top:195.0px;width:90px;text-align:center;font-size:8.45px;color:rgba(0,0,0,0.105);transform:rotate(-15deg)">wangxu21 10-13 18:08</div><div class="t" style="left:1101.4px;top:195.0px;width:90px;text-align:center;font-size:8.45px;color:rgba(0,0,0,0.105);transform:rotate(-15deg)">wangxu21 10-13 18:08</div><div class="t" style="left:-112.7px;top:262.5px;width:90px;text-align:center;font-size:8.45px;color:rgba(0,0,0,0.105);transform:rotate(-15deg)">wangxu21 10-13 18:08</div><div class="t" style="left:22.2px;top:262.5px;width:90px;text-align:center;font-size:8.45px;color:rgba(0,0,0,0.105);transform:rotate(-15deg)">wangxu21 10-13 18:08</div><div class="t" style="left:157.1px;top:262.5px;width:90px;text-align:center;font-size:8.45px;color:rgba(0,0,0,0.105);transform:rotate(-15deg)">wangxu21 10-13 18:08</div><div class="t" style="left:292.0px;top:262.5px;width:90px;text-align:center;font-size:8.45px;color:rgba(0,0,0,0.105);transform:rotate(-15deg)">wangxu21 10-13 18:08</div><div class="t" style="left:426.9px;top:262.5px;width:90px;text-align:center;font-size:8.45px;color:rgba(0,0,0,0.105);transform:rotate(-15deg)">wangxu21 10-13 18:08</div><div class="t" style="left:561.8px;top:262.5px;width:90px;text-align:center;font-size:8.45px;color:rgba(0,0,0,0.105);transform:rotate(-15deg)">wangxu21 10-13 18:08</div><div class="t" style="left:696.7px;top:262.5px;width:90px;text-align:center;font-size:8.45px;color:rgba(0,0,0,0.105);transform:rotate(-15deg)">wangxu21 10-13 18:08</div><div class="t" style="left:831.6px;top:262.5px;width:90px;text-align:center;font-size:8.45px;color:rgba(0,0,0,0.105);transform:rotate(-15deg)">wangxu21 10-13 18:08</div><div class="t" style="left:966.5px;top:262.5px;width:90px;text-align:center;font-size:8.45px;color:rgba(0,0,0,0.105);transform:rotate(-15deg)">wangxu21 10-13 18:08</div><div class="t" style="left:1101.4px;top:262.5px;width:90px;text-align:center;font-size:8.45px;color:rgba(0,0,0,0.105);transform:rotate(-15deg)">wangxu21 10-13 18:08</div><div class="t" style="left:-112.7px;top:330.0px;width:90px;text-align:center;font-size:8.45px;color:rgba(0,0,0,0.105);transform:rotate(-15deg)">wangxu21 10-13 18:08</div><div class="t" style="left:22.2px;top:330.0px;width:90px;text-align:center;font-size:8.45px;color:rgba(0,0,0,0.105);transform:rotate(-15deg)">wangxu21 10-13 18:08</div><div class="t" style="left:157.1px;top:330.0px;width:90px;text-align:center;font-size:8.45px;color:rgba(0,0,0,0.105);transform:rotate(-15deg)">wangxu21 10-13 18:08</div><div class="t" style="left:292.0px;top:330.0px;width:90px;text-align:center;font-size:8.45px;color:rgba(0,0,0,0.105);transform:rotate(-15deg)">wangxu21 10-13 18:08</div><div class="t" style="left:426.9px;top:330.0px;width:90px;text-align:center;font-size:8.45px;color:rgba(0,0,0,0.105);transform:rotate(-15deg)">wangxu21 10-13 18:08</div><div class="t" style="left:561.8px;top:330.0px;width:90px;text-align:center;font-size:8.45px;color:rgba(0,0,0,0.105);transform:rotate(-15deg)">wangxu21 10-13 18:08</div><div class="t" style="left:696.7px;top:330.0px;width:90px;text-align:center;font-size:8.45px;color:rgba(0,0,0,0.105);transform:rotate(-15deg)">wangxu21 10-13 18:08</div><div class="t" style="left:831.6px;top:330.0px;width:90px;text-align:center;font-size:8.45px;color:rgba(0,0,0,0.105);transform:rotate(-15deg)">wangxu21 10-13 18:08</div><div class="t" style="left:966.5px;top:330.0px;width:90px;text-align:center;font-size:8.45px;color:rgba(0,0,0,0.105);transform:rotate(-15deg)">wangxu21 10-13 18:08</div><div class="t" style="left:1101.4px;top:330.0px;width:90px;text-align:center;font-size:8.45px;color:rgba(0,0,0,0.105);transform:rotate(-15deg)">wangxu21 10-13 18:08</div><div class="t" style="left:-112.7px;top:397.5px;width:90px;text-align:center;font-size:8.45px;color:rgba(0,0,0,0.105);transform:rotate(-15deg)">wangxu21 10-13 18:08</div><div class="t" style="left:22.2px;top:397.5px;width:90px;text-align:center;font-size:8.45px;color:rgba(0,0,0,0.105);transform:rotate(-15deg)">wangxu21 10-13 18:08</div><div class="t" style="left:157.1px;top:397.5px;width:90px;text-align:center;font-size:8.45px;color:rgba(0,0,0,0.105);transform:rotate(-15deg)">wangxu21 10-13 18:08</div><div class="t" style="left:292.0px;top:397.5px;width:90px;text-align:center;font-size:8.45px;color:rgba(0,0,0,0.105);transform:rotate(-15deg)">wangxu21 10-13 18:08</div><div class="t" style="left:426.9px;top:397.5px;width:90px;text-align:center;font-size:8.45px;color:rgba(0,0,0,0.105);transform:rotate(-15deg)">wangxu21 10-13 18:08</div><div class="t" style="left:561.8px;top:397.5px;width:90px;text-align:center;font-size:8.45px;color:rgba(0,0,0,0.105);transform:rotate(-15deg)">wangxu21 10-13 18:08</div><div class="t" style="left:696.7px;top:397.5px;width:90px;text-align:center;font-size:8.45px;color:rgba(0,0,0,0.105);transform:rotate(-15deg)">wangxu21 10-13 18:08</div><div class="t" style="left:831.6px;top:397.5px;width:90px;text-align:center;font-size:8.45px;color:rgba(0,0,0,0.105);transform:rotate(-15deg)">wangxu21 10-13 18:08</div><div class="t" style="left:966.5px;top:397.5px;width:90px;text-align:center;font-size:8.45px;color:rgba(0,0,0,0.105);transform:rotate(-15deg)">wangxu21 10-13 18:08</div><div class="t" style="left:1101.4px;top:397.5px;width:90px;text-align:center;font-size:8.45px;color:rgba(0,0,0,0.105);transform:rotate(-15deg)">wangxu21 10-13 18:08</div><div class="t" style="left:-112.7px;top:465.0px;width:90px;text-align:center;font-size:8.45px;color:rgba(0,0,0,0.105);transform:rotate(-15deg)">wangxu21 10-13 18:08</div><div class="t" style="left:22.2px;top:465.0px;width:90px;text-align:center;font-size:8.45px;color:rgba(0,0,0,0.105);transform:rotate(-15deg)">wangxu21 10-13 18:08</div><div class="t" style="left:157.1px;top:465.0px;width:90px;text-align:center;font-size:8.45px;color:rgba(0,0,0,0.105);transform:rotate(-15deg)">wangxu21 10-13 18:08</div><div class="t" style="left:292.0px;top:465.0px;width:90px;text-align:center;font-size:8.45px;color:rgba(0,0,0,0.105);transform:rotate(-15deg)">wangxu21 10-13 18:08</div><div class="t" style="left:426.9px;top:465.0px;width:90px;text-align:center;font-size:8.45px;color:rgba(0,0,0,0.105);transform:rotate(-15deg)">wangxu21 10-13 18:08</div><div class="t" style="left:561.8px;top:465.0px;width:90px;text-align:center;font-size:8.45px;color:rgba(0,0,0,0.105);transform:rotate(-15deg)">wangxu21 10-13 18:08</div><div class="t" style="left:696.7px;top:465.0px;width:90px;text-align:center;font-size:8.45px;color:rgba(0,0,0,0.105);transform:rotate(-15deg)">wangxu21 10-13 18:08</div><div class="t" style="left:831.6px;top:465.0px;width:90px;text-align:center;font-size:8.45px;color:rgba(0,0,0,0.105);transform:rotate(-15deg)">wangxu21 10-13 18:08</div><div class="t" style="left:966.5px;top:465.0px;width:90px;text-align:center;font-size:8.45px;color:rgba(0,0,0,0.105);transform:rotate(-15deg)">wangxu21 10-13 18:08</div><div class="t" style="left:1101.4px;top:465.0px;width:90px;text-align:center;font-size:8.45px;color:rgba(0,0,0,0.105);transform:rotate(-15deg)">wangxu21 10-13 18:08</div><div class="t" style="left:-112.7px;top:532.5px;width:90px;text-align:center;font-size:8.45px;color:rgba(0,0,0,0.105);transform:rotate(-15deg)">wangxu21 10-13 18:08</div><div class="t" style="left:22.2px;top:532.5px;width:90px;text-align:center;font-size:8.45px;color:rgba(0,0,0,0.105);transform:rotate(-15deg)">wangxu21 10-13 18:08</div><div class="t" style="left:157.1px;top:532.5px;width:90px;text-align:center;font-size:8.45px;color:rgba(0,0,0,0.105);transform:rotate(-15deg)">wangxu21 10-13 18:08</div><div class="t" style="left:292.0px;top:532.5px;width:90px;text-align:center;font-size:8.45px;color:rgba(0,0,0,0.105);transform:rotate(-15deg)">wangxu21 10-13 18:08</div><div class="t" style="left:426.9px;top:532.5px;width:90px;text-align:center;font-size:8.45px;color:rgba(0,0,0,0.105);transform:rotate(-15deg)">wangxu21 10-13 18:08</div><div class="t" style="left:561.8px;top:532.5px;width:90px;text-align:center;font-size:8.45px;color:rgba(0,0,0,0.105);transform:rotate(-15deg)">wangxu21 10-13 18:08</div><div class="t" style="left:696.7px;top:532.5px;width:90px;text-align:center;font-size:8.45px;color:rgba(0,0,0,0.105);transform:rotate(-15deg)">wangxu21 10-13 18:08</div><div class="t" style="left:831.6px;top:532.5px;width:90px;text-align:center;font-size:8.45px;color:rgba(0,0,0,0.105);transform:rotate(-15deg)">wangxu21 10-13 18:08</div><div class="t" style="left:966.5px;top:532.5px;width:90px;text-align:center;font-size:8.45px;color:rgba(0,0,0,0.105);transform:rotate(-15deg)">wangxu21 10-13 18:08</div><div class="t" style="left:1101.4px;top:532.5px;width:90px;text-align:center;font-size:8.45px;color:rgba(0,0,0,0.105);transform:rotate(-15deg)">wangxu21 10-13 18:08</div><div class="t" style="left:-112.7px;top:600.0px;width:90px;text-align:center;font-size:8.45px;color:rgba(0,0,0,0.105);transform:rotate(-15deg)">wangxu21 10-13 18:08</div><div class="t" style="left:22.2px;top:600.0px;width:90px;text-align:center;font-size:8.45px;color:rgba(0,0,0,0.105);transform:rotate(-15deg)">wangxu21 10-13 18:08</div><div class="t" style="left:157.1px;top:600.0px;width:90px;text-align:center;font-size:8.45px;color:rgba(0,0,0,0.105);transform:rotate(-15deg)">wangxu21 10-13 18:08</div><div class="t" style="left:292.0px;top:600.0px;width:90px;text-align:center;font-size:8.45px;color:rgba(0,0,0,0.105);transform:rotate(-15deg)">wangxu21 10-13 18:08</div><div class="t" style="left:426.9px;top:600.0px;width:90px;text-align:center;font-size:8.45px;color:rgba(0,0,0,0.105);transform:rotate(-15deg)">wangxu21 10-13 18:08</div><div class="t" style="left:561.8px;top:600.0px;width:90px;text-align:center;font-size:8.45px;color:rgba(0,0,0,0.105);transform:rotate(-15deg)">wangxu21 10-13 18:08</div><div class="t" style="left:696.7px;top:600.0px;width:90px;text-align:center;font-size:8.45px;color:rgba(0,0,0,0.105);transform:rotate(-15deg)">wangxu21 10-13 18:08</div><div class="t" style="left:831.6px;top:600.0px;width:90px;text-align:center;font-size:8.45px;color:rgba(0,0,0,0.105);transform:rotate(-15deg)">wangxu21 10-13 18:08</div><div class="t" style="left:966.5px;top:600.0px;width:90px;text-align:center;font-size:8.45px;color:rgba(0,0,0,0.105);transform:rotate(-15deg)">wangxu21 10-13 18:08</div><div class="t" style="left:1101.4px;top:600.0px;width:90px;text-align:center;font-size:8.45px;color:rgba(0,0,0,0.105);transform:rotate(-15deg)">wangxu21 10-13 18:08</div></div>
</body></html>
